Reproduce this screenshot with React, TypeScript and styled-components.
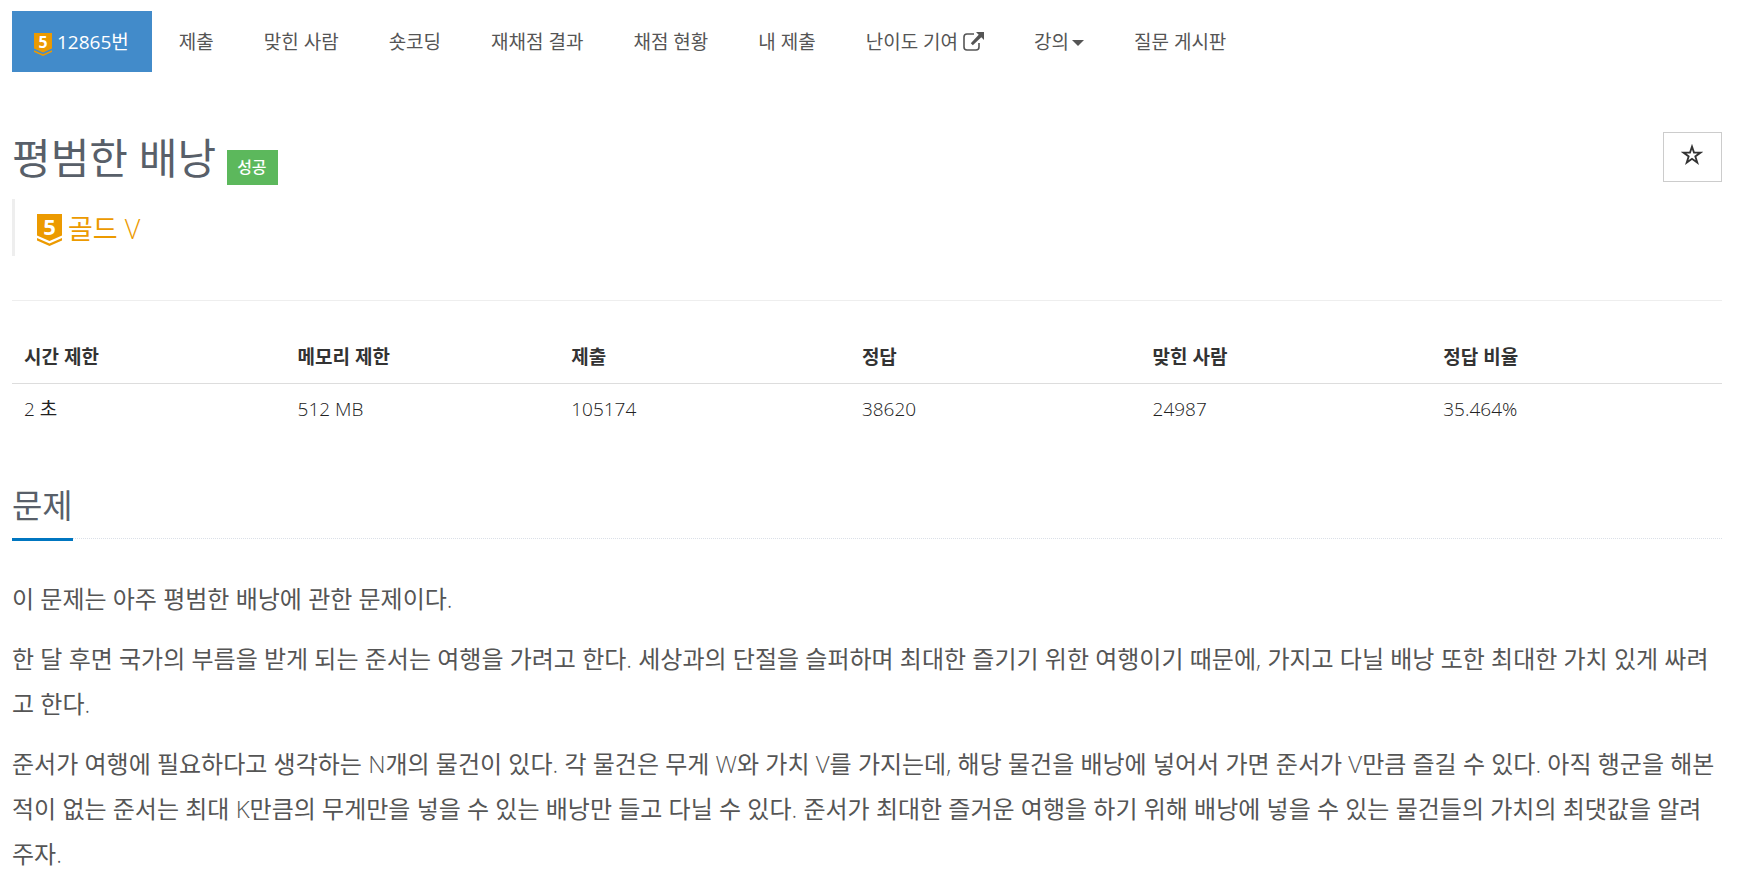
import React from 'react';
import styled, { createGlobalStyle } from 'styled-components';

const GlobalStyle = createGlobalStyle`
  *, *::before, *::after { box-sizing: border-box; }
  body {
    margin: 0;
    background: #fff;
    color: #333;
    font-family: 'Open Sans', 'Noto Sans CJK KR', sans-serif;
    font-size: 19px;
    line-height: 27px;
  }
  a { text-decoration: none; }
`;

const lightLatin = `'Open Sans Light', 'Open Sans', 'Noto Sans CJK KR', sans-serif`;

const Page = styled.div`
  padding: 11px 21px 0 12px;
`;

const Nav = styled.nav`
  display: flex;
  flex-wrap: wrap;
  gap: 5px;
`;

const NavLink = styled.a<{ $active?: boolean; $tight?: boolean }>`
  display: flex;
  align-items: center;
  gap: ${(p) => (p.$tight ? 3 : 5)}px;
  height: 61px;
  padding: 2px 23px 0 22px;
  color: ${(p) => (p.$active ? '#fff' : '#555')};
  background: ${(p) => (p.$active ? '#428bca' : 'transparent')};
`;

const Caret = styled.span`
  border-top: 6px solid #555;
  border-left: 6px solid transparent;
  border-right: 6px solid transparent;
`;

const Header = styled.header`
  display: flex;
  justify-content: space-between;
  align-items: flex-start;
  padding-top: 60px;
`;

const TitleRow = styled.div`
  display: flex;
  align-items: flex-end;
  gap: 11px;
  height: 53px;
`;

const Title = styled.h1`
  margin: 0;
  color: #585f69;
  font-size: 42px;
  font-weight: 400;
  line-height: 55px;
`;

const Badge = styled.span`
  padding: 0 11px 0 10px;
  background: #5cb85c;
  color: #fff;
  font-size: 16px;
  font-weight: 500;
  line-height: 35px;
`;

const StarButton = styled.button`
  display: flex;
  align-items: center;
  justify-content: center;
  width: 59px;
  height: 50px;
  padding: 0 2px 5px 0;
  border: 1px solid #ccc;
  background: #fff;
  color: #333;
`;

const Tier = styled.div`
  display: flex;
  align-items: center;
  gap: 6px;
  height: 57px;
  margin-top: 14px;
  padding: 1px 0 0 22px;
  border-left: 3px solid #eee;
  color: #ec9a00;
  font-family: ${lightLatin};
  font-size: 27px;
`;

const Divider = styled.hr`
  margin: 44px 0 32px;
  border: 0;
  border-top: 1px solid #eee;
`;

const InfoTable = styled.table`
  width: 100%;
  table-layout: fixed;
  border-collapse: collapse;
  text-align: left;
`;

const Th = styled.th<{ $wide?: boolean }>`
  width: ${(p) => (p.$wide ? 17 : 16)}%;
  height: 50px;
  padding: 0 12px;
  border-bottom: 1px solid #ddd;
  font-weight: 700;
`;

const Td = styled.td`
  height: 53px;
  padding: 0 12px;
  color: #222;
  font-family: ${lightLatin};
`;

const Headline = styled.div`
  display: flex;
  height: 57px;
  margin: 46px 0 37px;
  border-bottom: 1px dotted #dbe0e8;
`;

const HeadlineText = styled.h2`
  height: 59px;
  margin: 0;
  border-bottom: 3px solid #0076c0;
  color: #585f69;
  font-family: ${lightLatin};
  font-size: 33px;
  font-weight: 400;
  line-height: 48px;
`;

const Paragraph = styled.p`
  margin: 0 0 15px;
  color: #555;
  font-family: ${lightLatin};
  font-size: 24px;
  line-height: 45px;
`;

const TierSvg = styled.svg`
  overflow: visible;
  flex: none;
  margin-top: 4px;
`;

function TierIcon({ width, height }: { width: number; height: number }) {
  return (
    <TierSvg width={width} height={height} viewBox="0 0 25 32" aria-hidden="true">
      <path d="M0 0H25V21.5L12.5 27L0 21.5Z" fill="#ec9a00" />
      <path d="M0 24L12.5 29.5L25 24V26.5L12.5 32L0 26.5Z" fill="#ec9a00" />
      <text x="12.5" y="20.5" fill="#fff" textAnchor="middle" fontFamily="Open Sans, sans-serif" fontWeight="700" fontSize="22">
        5
      </text>
    </TierSvg>
  );
}

function ExternalIcon() {
  return (
    <svg width="21" height="21" viewBox="0 0 21 21" aria-hidden="true">
      <path d="M11 2H4Q1 2 1 5V15Q1 18 4 18H13Q16 18 16 15V11" fill="none" stroke="#555" strokeWidth="1.6" />
      <path d="M13 0H21V8L18.3 5.3L9.8 13.2L7.8 11.2L15.7 2.7Z" fill="#555" />
    </svg>
  );
}

function StarIcon() {
  return (
    <svg width="22" height="21" viewBox="0 0 22 21" aria-hidden="true">
      <path
        d="M11 2.6L13 8.6H19.6L14.3 12.4L16.3 18.6L11 14.8L5.7 18.6L7.7 12.4L2.4 8.6H9Z"
        fill="none"
        stroke="#333"
        strokeWidth="1.8"
      />
    </svg>
  );
}

const stats = [
  { label: '시간 제한', value: '2 초' },
  { label: '메모리 제한', value: '512 MB' },
  { label: '제출', value: '105174', wide: true },
  { label: '정답', value: '38620', wide: true },
  { label: '맞힌 사람', value: '24987', wide: true },
  { label: '정답 비율', value: '35.464%', wide: true },
];

const links = ['제출', '맞힌 사람', '숏코딩', '재채점 결과', '채점 현황', '내 제출'];

const paragraphs = [
  '이 문제는 아주 평범한 배낭에 관한 문제이다.',
  '한 달 후면 국가의 부름을 받게 되는 준서는 여행을 가려고 한다. 세상과의 단절을 슬퍼하며 최대한 즐기기 위한 여행이기 때문에, 가지고 다닐 배낭 또한 최대한 가치 있게 싸려고 한다.',
  '준서가 여행에 필요하다고 생각하는 N개의 물건이 있다. 각 물건은 무게 W와 가치 V를 가지는데, 해당 물건을 배낭에 넣어서 가면 준서가 V만큼 즐길 수 있다. 아직 행군을 해본 적이 없는 준서는 최대 K만큼의 무게만을 넣을 수 있는 배낭만 들고 다닐 수 있다. 준서가 최대한 즐거운 여행을 하기 위해 배낭에 넣을 수 있는 물건들의 가치의 최댓값을 알려주자.',
];

export default function App() {
  return (
    <Page lang="ko">
      <GlobalStyle />
      <Nav>
        <NavLink href="#" $active>
          <TierIcon width={18} height={23} />
          12865번
        </NavLink>
        {links.map((label) => (
          <NavLink key={label} href="#">
            {label}
          </NavLink>
        ))}
        <NavLink href="#">
          난이도 기여
          <ExternalIcon />
        </NavLink>
        <NavLink href="#" $tight>
          강의
          <Caret />
        </NavLink>
        <NavLink href="#">질문 게시판</NavLink>
      </Nav>
      <main>
        <Header>
          <TitleRow>
            <Title>평범한 배낭</Title>
            <Badge>성공</Badge>
          </TitleRow>
          <StarButton aria-label="즐겨찾기">
            <StarIcon />
          </StarButton>
        </Header>
        <Tier>
          <TierIcon width={25} height={32} />
          골드 V
        </Tier>
        <Divider />
        <InfoTable>
          <thead>
            <tr>
              {stats.map((s) => (
                <Th key={s.label} $wide={s.wide}>
                  {s.label}
                </Th>
              ))}
            </tr>
          </thead>
          <tbody>
            <tr>
              {stats.map((s) => (
                <Td key={s.label}>{s.value}</Td>
              ))}
            </tr>
          </tbody>
        </InfoTable>
        <section>
          <Headline>
            <HeadlineText>문제</HeadlineText>
          </Headline>
          {paragraphs.map((text) => (
            <Paragraph key={text}>{text}</Paragraph>
          ))}
        </section>
      </main>
    </Page>
  );
}
